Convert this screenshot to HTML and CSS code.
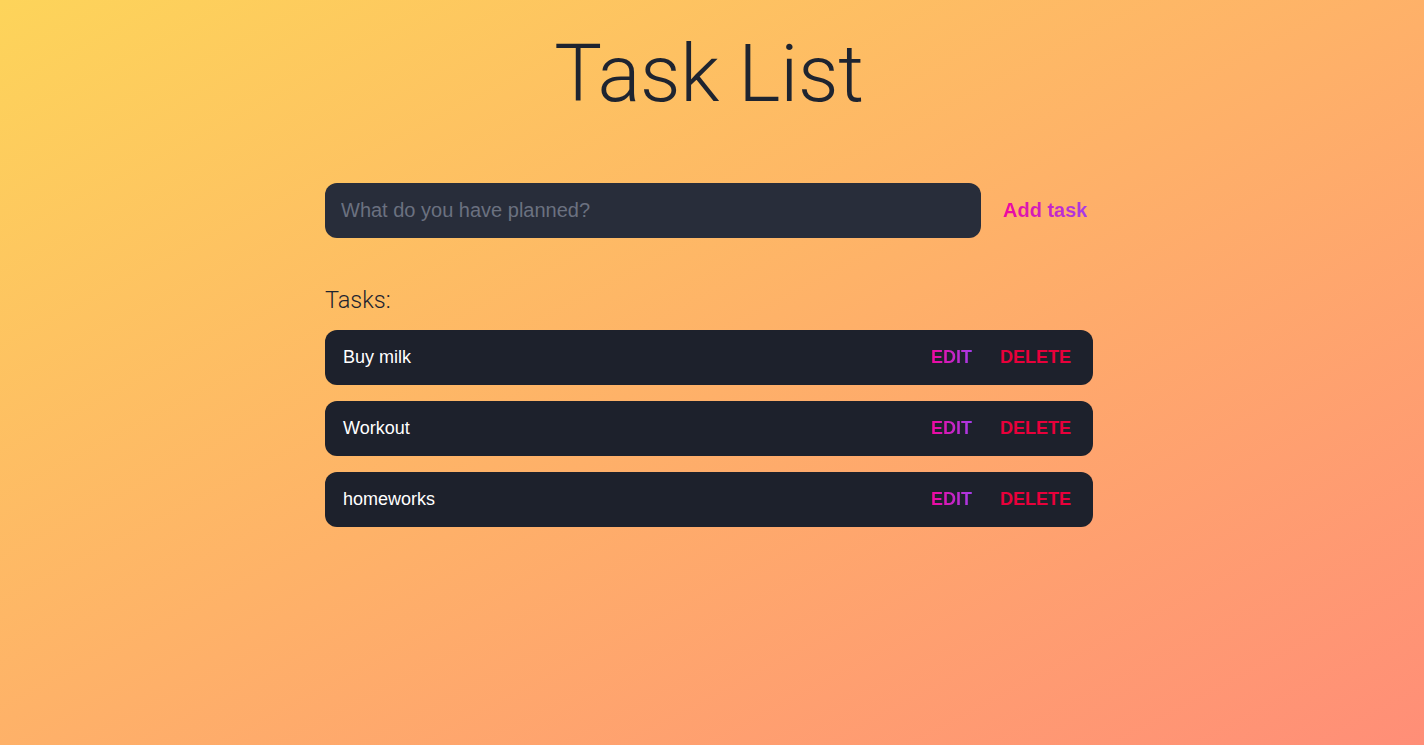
FILE: index.html
```html
<!DOCTYPE html>
<html>
<head>
<meta charset="utf-8">
<link rel="stylesheet" href="styles.css">
</head>
<body>
<div class="page">
  <h1 class="title">Task List</h1>
  <div class="content">
    <form class="new-task">
      <input class="task-input" type="text" placeholder="What do you have planned?">
      <button class="add-btn" type="button"><span class="grad-text">Add task</span></button>
    </form>
    <h2 class="tasks-label">Tasks:</h2>
    <div class="tasks">
      <div class="task">
        <span class="task-text">Buy milk</span>
        <div class="actions">
          <button class="edit"><span class="grad-text">EDIT</span></button>
          <button class="delete">DELETE</button>
        </div>
      </div>
      <div class="task">
        <span class="task-text">Workout</span>
        <div class="actions">
          <button class="edit"><span class="grad-text">EDIT</span></button>
          <button class="delete">DELETE</button>
        </div>
      </div>
      <div class="task">
        <span class="task-text">homeworks</span>
        <div class="actions">
          <button class="edit"><span class="grad-text">EDIT</span></button>
          <button class="delete">DELETE</button>
        </div>
      </div>
    </div>
  </div>
</div>
</body>
</html>
```
FILE: styles.css
```css
* { box-sizing: border-box; }
html, body { margin: 0; height: 100%; }
body {
  background: linear-gradient(to bottom right, #fdd45a, #ff8e77);
  font-family: "Liberation Sans", Arial, sans-serif;
  color: #1f2430;
  min-height: 745px;
}
.page {
  padding-right: 6px;
  display: flex;
  flex-direction: column;
  align-items: center;
}
.title {
  margin: 26px 0 0;
  font-family: "Roboto", "Liberation Sans", sans-serif;
  font-weight: 300;
  font-size: 80px;
  line-height: 96px;
  color: #1e2430;
  letter-spacing: -0.3px;
}
.content {
  width: 768px;
  margin-top: 61px;
}
.new-task {
  display: flex;
  align-items: center;
  gap: 22px;
  margin: 0;
}
.task-input {
  width: 656px;
  height: 55px;
  border: none;
  outline: none;
  border-radius: 12px;
  background: #282d3a;
  padding: 0 16px;
  font-family: "Liberation Sans", Arial, sans-serif;
  font-size: 20px;
  color: #e5e7eb;
}
.task-input::placeholder { color: #6b7180; }
.add-btn {
  background: none;
  border: none;
  padding: 0;
  font-family: "Liberation Sans", Arial, sans-serif;
  font-weight: 700;
  font-size: 20px;
  cursor: pointer;
}
.grad-text {
  background: linear-gradient(to right, #f0079e, #a63ce8);
  -webkit-background-clip: text;
  background-clip: text;
  color: transparent;
}
.tasks-label {
  margin: 48px 0 0;
  font-family: "Roboto", "Liberation Sans", sans-serif;
  font-weight: 300;
  font-size: 23.5px;
  line-height: 28px;
  color: #1e2430;
}
.tasks {
  margin-top: 16px;
  display: flex;
  flex-direction: column;
  gap: 16px;
}
.task {
  height: 55px;
  background: #1d212c;
  border-radius: 12px;
  display: flex;
  align-items: center;
  justify-content: space-between;
  padding: 0 22px 0 18px;
}
.task-text {
  color: #ffffff;
  font-size: 18px;
}
.actions {
  display: flex;
  gap: 28px;
}
.actions button {
  background: none;
  border: none;
  padding: 0;
  font-family: "Liberation Sans", Arial, sans-serif;
  font-weight: 700;
  font-size: 18px;
  cursor: pointer;
}
.delete { color: #e8003b; }
```
